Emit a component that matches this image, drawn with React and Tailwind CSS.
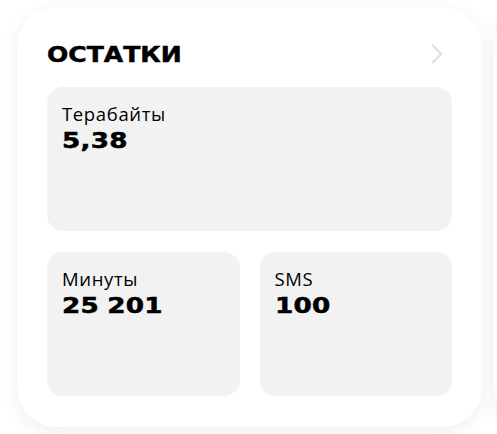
import React from "react";
import { ChevronRight } from "lucide-react";

const Tile = ({ label, value, className = "" }) => {
  return (
    <div className={`bg-[#f2f2f2] rounded-[16px] px-[15px] pt-[16px] ${className}`}>
      <div className="text-[18.5px] leading-[21px] tracking-[0.035em] text-black font-['Open_Sans',sans-serif]">
        {label}
      </div>
      <div className="mt-[5px] text-[21px] leading-[24px] font-bold tracking-[0.01em] text-black font-['DejaVu_Sans',sans-serif] origin-left scale-x-[1.25] [-webkit-text-stroke:0.5px_black] [word-spacing:-1px]">
        {value}
      </div>
    </div>
  );
};

const App = () => {
  return (
    <div className="w-[497px] h-[434px] overflow-hidden bg-white flex gap-3 pl-[17px] pt-[7px]">
      <div className="shrink-0 w-[465px] h-[420px] rounded-[40px] bg-white shadow-[0_4px_18px_rgba(0,0,0,0.07)] px-[30px] pt-[23px]">
        <div className="h-12 flex items-center justify-between">
          <h2 className="text-[22px] font-bold text-black font-['DejaVu_Sans',sans-serif] origin-left scale-x-[1.14] [-webkit-text-stroke:0.5px_black]">
            ОСТАТКИ
          </h2>
          <ChevronRight className="w-[34px] h-[34px] -mr-[2px] text-[#dcdee3]" strokeWidth={1.4} />
        </div>
        <Tile label="Терабайты" value="5,38" className="mt-[9px] h-[144px]" />
        <div className="mt-[21px] grid grid-cols-2 gap-[20px]">
          <Tile label="Минуты" value="25 201" className="h-[144px]" />
          <Tile label="SMS" value="100" className="h-[144px]" />
        </div>
      </div>
      <div className="shrink-0 w-[465px] h-[420px] rounded-[40px] bg-white shadow-[0_4px_18px_rgba(0,0,0,0.07)]" />
    </div>
  );
};

export default App;
